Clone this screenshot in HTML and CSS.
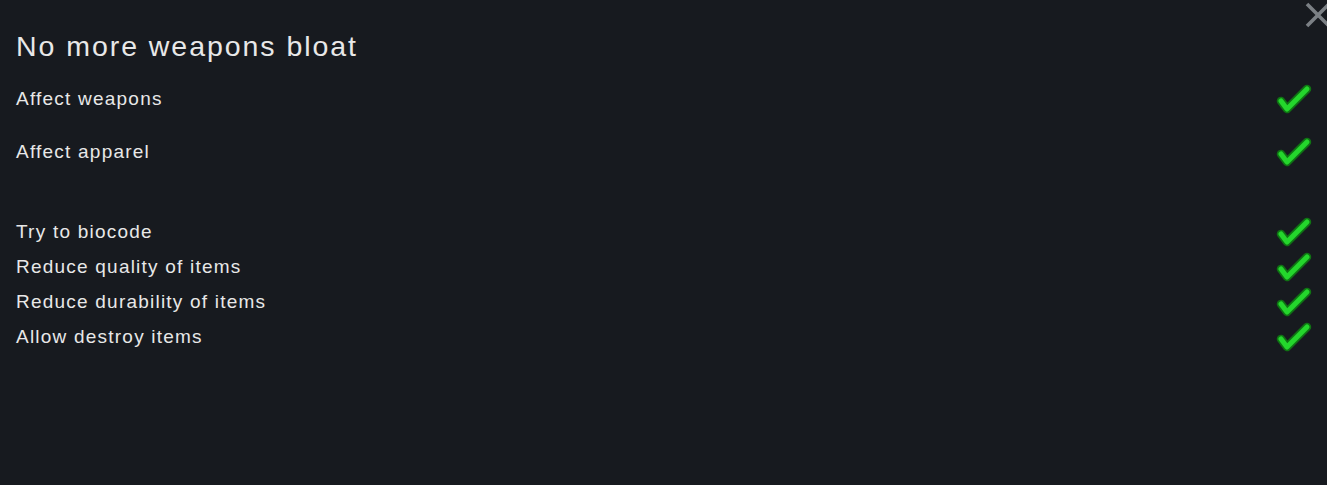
FILE: index.html
```html
<!DOCTYPE html>
<html>
<head>
<meta charset="utf-8">
<link rel="stylesheet" href="styles.css">
</head>
<body>
<div class="dialog">
  <button class="close" aria-label="Close">
    <svg width="26" height="26" viewBox="0 0 26 26"><path d="M2 2 L24 24 M24 2 L2 24" stroke="#7b8085" stroke-width="3.6" fill="none"/></svg>
  </button>
  <h1 class="title">No more weapons bloat</h1>
  <div class="group group-wide">
    <div class="row"><span class="label">Affect weapons</span><span class="check"><svg width="36" height="32" viewBox="0 0 36 32"><polyline points="5,18 11,26 31,6" class="ck-out"/><polyline points="5,18 11,26 31,6" class="ck-in"/></svg></span></div>
    <div class="row"><span class="label">Affect apparel</span><span class="check"><svg width="36" height="32" viewBox="0 0 36 32"><polyline points="5,18 11,26 31,6" class="ck-out"/><polyline points="5,18 11,26 31,6" class="ck-in"/></svg></span></div>
  </div>
  <div class="group group-tight">
    <div class="row"><span class="label">Try to biocode</span><span class="check"><svg width="36" height="32" viewBox="0 0 36 32"><polyline points="5,18 11,26 31,6" class="ck-out"/><polyline points="5,18 11,26 31,6" class="ck-in"/></svg></span></div>
    <div class="row"><span class="label">Reduce quality of items</span><span class="check"><svg width="36" height="32" viewBox="0 0 36 32"><polyline points="5,18 11,26 31,6" class="ck-out"/><polyline points="5,18 11,26 31,6" class="ck-in"/></svg></span></div>
    <div class="row"><span class="label">Reduce durability of items</span><span class="check"><svg width="36" height="32" viewBox="0 0 36 32"><polyline points="5,18 11,26 31,6" class="ck-out"/><polyline points="5,18 11,26 31,6" class="ck-in"/></svg></span></div>
    <div class="row"><span class="label">Allow destroy items</span><span class="check"><svg width="36" height="32" viewBox="0 0 36 32"><polyline points="5,18 11,26 31,6" class="ck-out"/><polyline points="5,18 11,26 31,6" class="ck-in"/></svg></span></div>
  </div>
</div>
</body>
</html>
```

FILE: styles.css
```css
html, body {
  margin: 0;
  padding: 0;
  height: 100%;
  background: #171a1f;
  overflow: hidden;
}
.dialog {
  position: relative;
  height: 100%;
  padding: 25px 16px 0 16px;
  box-sizing: border-box;
  font-family: "Liberation Sans", Arial, sans-serif;
  color: #e8e8e8;
}
.close {
  position: absolute;
  top: 2px;
  left: 1305px;
  padding: 0;
  margin: 0;
  border: 0;
  background: none;
  width: 26px;
  height: 26px;
}
.close svg { display: block; }
.title {
  margin: 0;
  font-size: 28.5px;
  font-weight: normal;
  letter-spacing: 1.95px;
  line-height: 42px;
  height: 40px;
}
.group {
  display: flex;
  flex-direction: column;
}
.group-wide {
  margin-top: 16px;
  gap: 18px;
}
.group-tight {
  margin-top: 45px;
}
.row {
  display: flex;
  align-items: center;
  justify-content: space-between;
  height: 35px;
}
.label {
  font-size: 19px;
  letter-spacing: 1.22px;
  line-height: 22px;
}
.check {
  display: block;
  width: 36px;
  height: 32px;
  margin-right: -1px;
}
.check svg { display: block; }
.ck-out {
  fill: none;
  stroke: #0f7313;
  stroke-width: 8.5;
  stroke-linecap: round;
  stroke-linejoin: round;
}
.ck-in {
  fill: none;
  stroke: #24d62c;
  stroke-width: 5;
  stroke-linecap: round;
  stroke-linejoin: round;
}
```
